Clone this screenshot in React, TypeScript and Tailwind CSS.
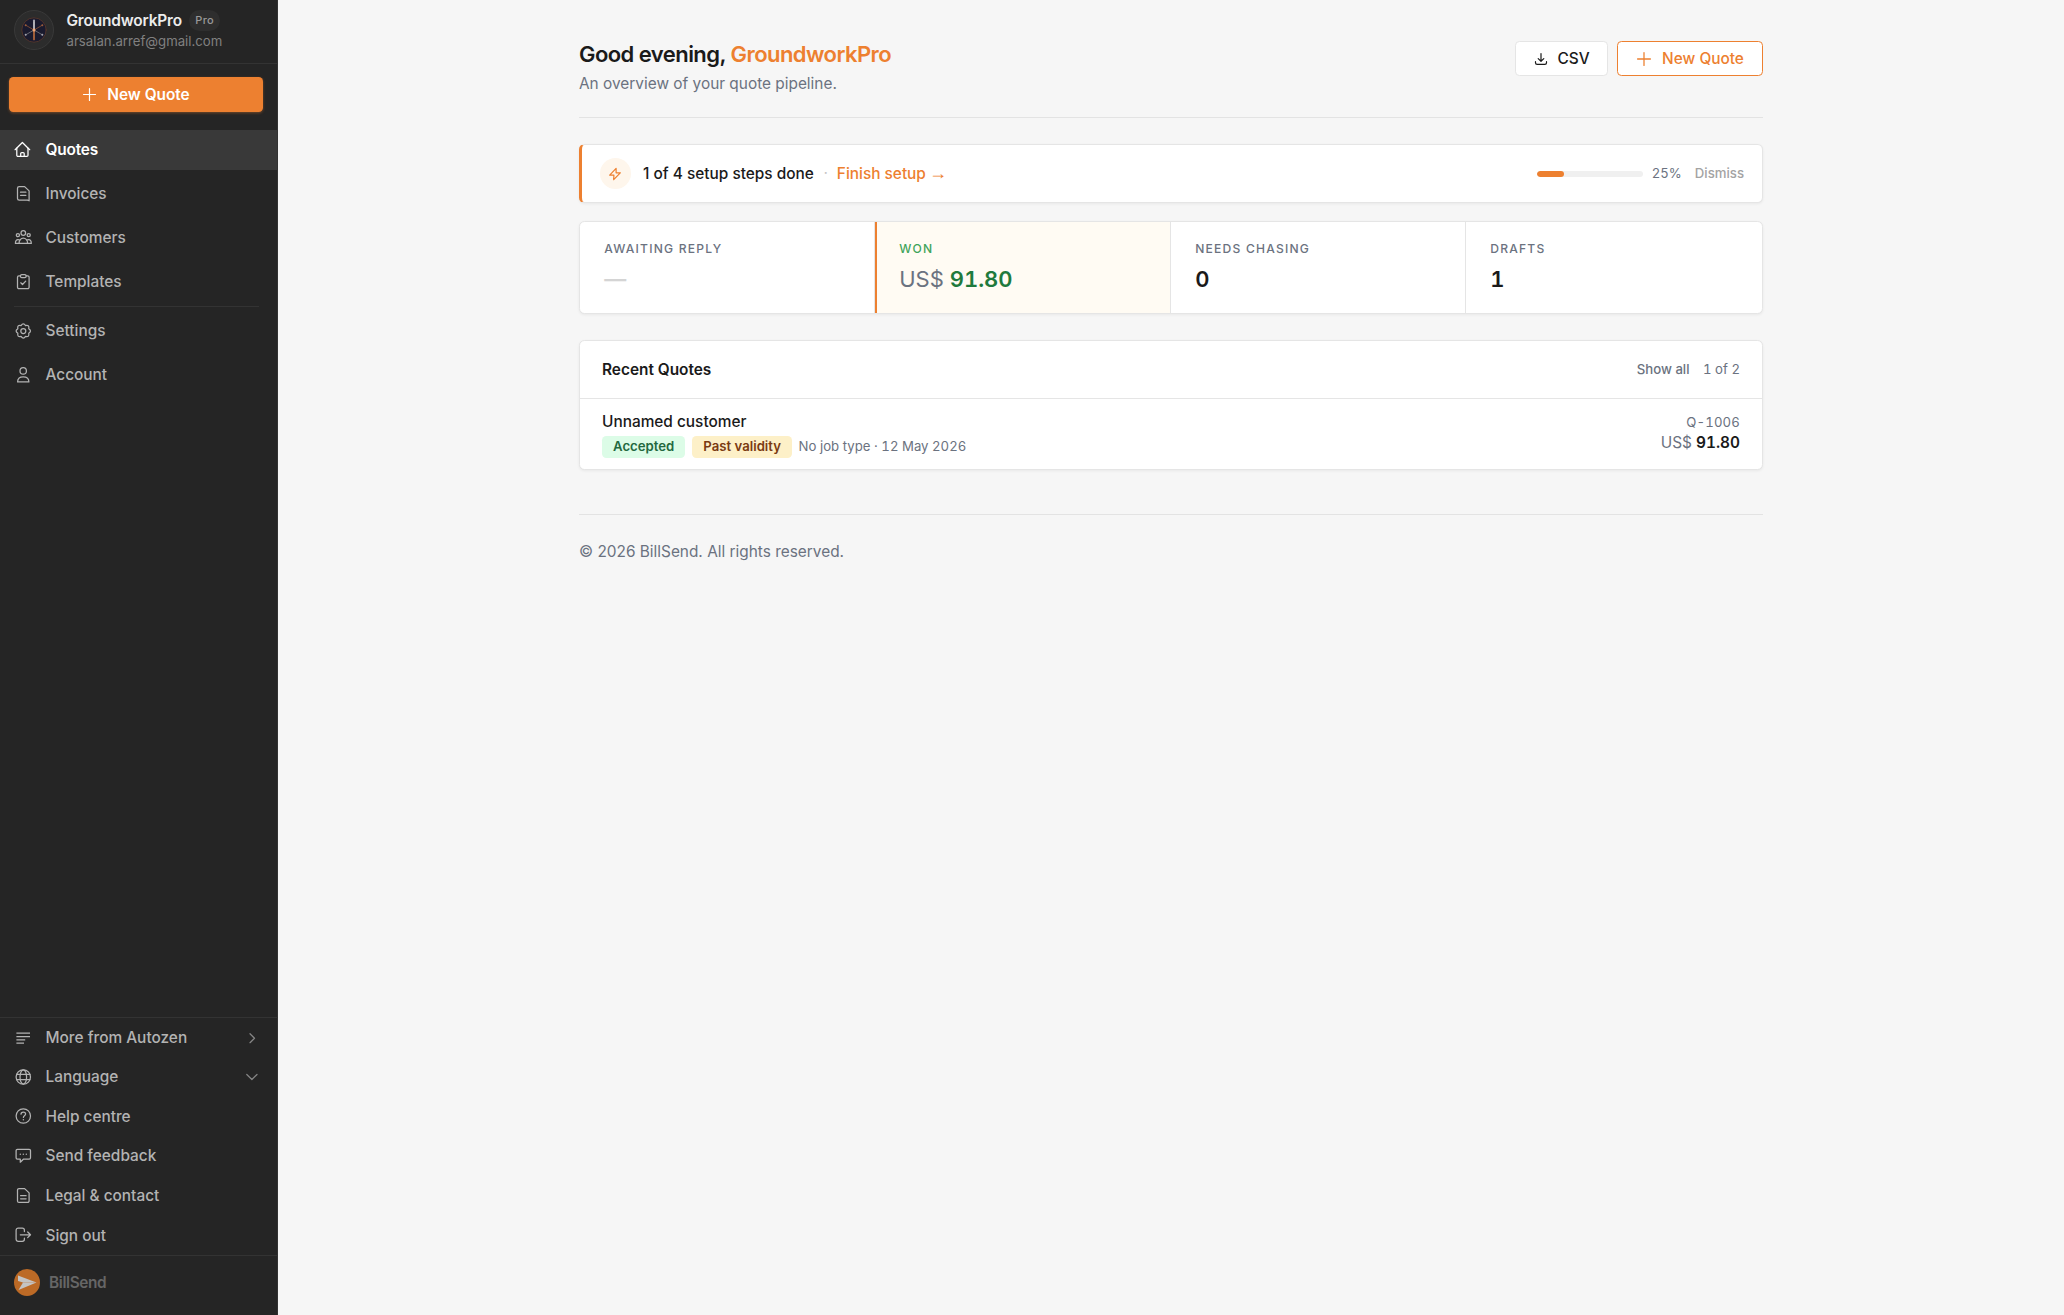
import type { ReactNode } from 'react';

function Icon({ children, className = 'size-[18px]' }: { children: ReactNode; className?: string }) {
  return (
    <svg
      viewBox="0 0 18 18"
      fill="none"
      stroke="currentColor"
      strokeWidth="1.25"
      strokeLinecap="round"
      strokeLinejoin="round"
      className={`${className} shrink-0`}
    >
      {children}
    </svg>
  );
}

const icons = {
  home: (
    <>
      <path d="M1.1 8.7 8.4 1.5l7.3 7.2" />
      <path d="M2.8 7.2v7a1.2 1.2 0 0 0 1.2 1.2h8.8a1.2 1.2 0 0 0 1.2-1.2v-7" />
      <path d="M6.7 15.2v-2.6a1.1 1.1 0 0 1 1.1-1.1h1.3a1.1 1.1 0 0 1 1.1 1.1v2.6" />
    </>
  ),
  invoice: (
    <>
      <path d="M5.2 1.6h5.4l4.5 4.3v9.9l-1.6-.7H5.2a1.7 1.7 0 0 1-1.7-1.7V3.3a1.7 1.7 0 0 1 1.7-1.7Z" />
      <path d="M6.5 7.2h5.4M6.5 10.3h5.4" />
    </>
  ),
  customers: (
    <>
      <circle cx="9.3" cy="4" r="2.3" />
      <circle cx="3.9" cy="6.1" r="1.6" />
      <circle cx="14.7" cy="6.1" r="1.6" />
      <path d="M5 14.4c0-3.1 1.9-5.2 4.3-5.2s4.3 2.1 4.3 5.2Z" />
      <path d="M5 14.4H1.4c0-2.3.9-3.9 2.6-3.9.7 0 1.3.2 1.7.6M13.6 14.4h3.7c0-2.3-.9-3.9-2.7-3.9-.7 0-1.3.2-1.7.6" />
    </>
  ),
  templates: (
    <>
      <path d="M6.4 2.9H4.9a1.4 1.4 0 0 0-1.4 1.4v10a1.4 1.4 0 0 0 1.4 1.4h8.8a1.4 1.4 0 0 0 1.4-1.4v-10a1.4 1.4 0 0 0-1.4-1.4h-1.5" />
      <rect x="6.5" y="1.5" width="5.6" height="3.2" rx="1.2" />
      <path d="m6.8 9.8 1.7 1.7 3.2-3.4" />
    </>
  ),
  settings: (
    <>
      <circle cx="9.3" cy="9" r="2.5" />
      <path d="M7.04 3.55Q9.3.1 11.56 3.55 15.6 2.7 14.75 6.74 18.2 9 14.75 11.26 15.6 15.3 11.56 14.45 9.3 17.9 7.04 14.45 3 15.3 3.85 11.26.4 9 3.85 6.74 3 2.7 7.04 3.55Z" />
    </>
  ),
  account: (
    <>
      <circle cx="9.2" cy="4.9" r="3.2" />
      <path d="M3.6 15.9c0-3 2-5 5.6-5s5.7 2 5.7 5Z" />
    </>
  ),
  more: <path d="M2.4 4.2H16M2.4 7.5H16M2.4 10.9h8.8M2.4 14.2h7.6" strokeLinecap="butt" />,
  globe: (
    <>
      <circle cx="9.3" cy="9" r="7.2" />
      <ellipse cx="9.3" cy="9" rx="3.3" ry="7.2" />
      <path d="M2.7 6.4h13.2M2.7 11.6h13.2" />
    </>
  ),
  help: (
    <>
      <circle cx="9.3" cy="9" r="7.2" />
      <path d="M7 7.2c0-1.3 1-2.2 2.300-2.200s2.300.9 2.300 2.100c0 1.600-2.200 1.700-2.200 3.300" />
      <path d="M9.4 12.7v.1" strokeWidth="1.5" />
    </>
  ),
  feedback: (
    <>
      <path d="M3.4 2.3h11.8a1.3 1.3 0 0 1 1.3 1.3v7.1a1.3 1.3 0 0 1-1.3 1.3H9.6l-3.3 3.2V12H3.4a1.3 1.3 0 0 1-1.3-1.3V3.6a1.3 1.3 0 0 1 1.3-1.3Z" />
      <path d="M6.3 7.2v.1M9.3 7.2v.1M12.3 7.2v.1" strokeWidth="1.4" />
    </>
  ),
  page: (
    <>
      <path d="M5 1.6h5.6l4.5 4.3v8a1.5 1.5 0 0 1-1.5 1.500H5a1.500 1.500 0 0 1-1.500-1.500V3.100A1.500 1.500 0 0 1 5 1.600Z" />
      <path d="M6.600 8.700h5.500M6.600 11.800h5.500" />
    </>
  ),
  signOut: (
    <>
      <path d="M10.4 5.5V4.300a2.100 2.100 0 0 0-2.100-2.100H4.200a2.100 2.100 0 0 0-2.100 2.100v9a2.100 2.100 0 0 0 2.100 2.100h4.100a2.100 2.100 0 0 0 2.100-2.100v-1.200" />
      <path d="M6.3 8.800h10M13.700 6l2.800 2.800-2.800 2.800" />
    </>
  ),
};

type IconName = keyof typeof icons;

const MAIN_NAV: { label: string; icon: IconName; active?: boolean }[] = [
  { label: 'Quotes', icon: 'home', active: true },
  { label: 'Invoices', icon: 'invoice' },
  { label: 'Customers', icon: 'customers' },
  { label: 'Templates', icon: 'templates' },
];

const ACCOUNT_NAV: { label: string; icon: IconName }[] = [
  { label: 'Settings', icon: 'settings' },
  { label: 'Account', icon: 'account' },
];

const FOOTER_NAV: { label: string; icon: IconName; arrow?: 'right' | 'down' }[] = [
  { label: 'More from Autozen', icon: 'more', arrow: 'right' },
  { label: 'Language', icon: 'globe', arrow: 'down' },
  { label: 'Help centre', icon: 'help' },
  { label: 'Send feedback', icon: 'feedback' },
  { label: 'Legal & contact', icon: 'page' },
  { label: 'Sign out', icon: 'signOut' },
];

export default function App() {
  return (
    <div className="flex h-screen bg-[#f6f6f6] font-['Inter',sans-serif] text-[15.4px] text-[#1a1a1a]">
      <Sidebar />
      <main className="flex-1">
        <div className="mx-auto w-[1184px] pt-[41px]">
          <Header />
          <SetupCard />
          <Stats />
          <RecentQuotes />
          <footer className="mt-11 border-t border-[#e3e3e3] pt-[26px] leading-[22px] text-[#6b7280]">
            © 2026 BillSend. All rights reserved.
          </footer>
        </div>
      </main>
    </div>
  );
}

function Sidebar() {
  return (
    <aside className="flex w-[278px] shrink-0 flex-col border-r border-[#333] bg-[#252525] font-medium text-[#b3b3b3]">
      <div className="flex h-16 items-start border-b border-[#333] pl-3.5 pt-2.5">
        <Avatar />
        <div className="ml-[12.5px]">
          <div className="flex h-[21px] items-center">
            <span className="font-semibold tracking-[-0.01em] text-[#ececec]">GroundworkPro</span>
            <span className="ml-[7px] flex h-[21px] items-center rounded-full bg-[#2e2e2e] px-[6.5px] text-[11px] tracking-[0.02em] text-[#999]">Pro</span>
          </div>
          <div className="text-[13.2px] font-normal leading-5 text-[#808080]">arsalan.arref@gmail.com</div>
        </div>
      </div>

      <button className="ml-[9px] mt-[13px] flex h-[35px] w-[254px] items-center justify-center gap-2.5 rounded-[4.4px] bg-[#ed8030] font-semibold text-white shadow-[0_1px_3px_rgba(237,128,48,0.4)]">
        <Plus />
        New Quote
      </button>

      <nav className="mt-[18px] flex flex-col gap-1">
        {MAIN_NAV.map((item) => (
          <a
            key={item.label}
            className={`flex h-10 items-center pl-3.5 ${item.active ? 'bg-[#393939] font-semibold tracking-[-0.01em] text-white' : ''}`}
          >
            <Icon>{icons[item.icon]}</Icon>
            <span className="ml-[13.5px]">{item.label}</span>
          </a>
        ))}
      </nav>
      <div className="mb-1 ml-3.5 mr-[18px] mt-1 h-px bg-[#333]" />
      <nav className="flex flex-col gap-1">
        {ACCOUNT_NAV.map((item) => (
          <a key={item.label} className="flex h-10 items-center pl-3.5">
            <Icon>{icons[item.icon]}</Icon>
            <span className="ml-[13.5px]">{item.label}</span>
          </a>
        ))}
      </nav>

      <div className="mt-auto border-t border-[#333]">
        {FOOTER_NAV.map((item) => (
          <a key={item.label} className="flex h-[39.6px] items-center pl-3.5 pr-4 first:h-[38.8px]">
            <Icon>{icons[item.icon]}</Icon>
            <span className="ml-[13.5px] flex-1">{item.label}</span>
            {item.arrow && (
              <Icon className="size-[18px] text-[#858585]">
                {item.arrow === 'right' ? <path d="m7 4.7 4.5 4.5L7 13.7" /> : <path d="m3.8 6.5 5.1 5 5.1-5" />}
              </Icon>
            )}
          </a>
        ))}
      </div>
      <div className="flex h-[60px] items-start border-t border-[#333] pl-3.5 pt-[13px]">
        <svg viewBox="0 0 26 27" className="h-[27px] w-[26px]">
          <ellipse cx="13" cy="13.5" rx="13" ry="13.5" fill="#bc6a26" />
          <path d="M4 6.5 22.500 13.500 9 13.500 4 12Z" fill="#c4c4c4" />
          <path d="M9 13.500h13.500L4.500 21Z" fill="#c4c4c4" />
        </svg>
        <span className="ml-[9px] font-semibold leading-[27px] tracking-[-0.025em] text-[#666]">BillSend</span>
      </div>
    </aside>
  );
}

function Avatar() {
  return (
    <div className="flex size-10 shrink-0 items-center justify-center rounded-full border border-[#393939] bg-[#2c2c2c]">
      <svg viewBox="0 0 26 26" className="size-[26px]" strokeLinecap="round">
        <circle cx="13" cy="13" r="12.2" fill="#1a1a2e" stroke="#5d3a2b" strokeWidth="0.8" />
        <path d="M4.7 8.2 13 13l8.300-4.800" stroke="#8a5236" fill="none" strokeWidth="0.8" />
        <path d="M4.7 17.8 13 13l8.300 4.800" stroke="#77777f" fill="none" strokeWidth="0.8" />
        <path d="M13 4v9" stroke="#f0f0f0" strokeWidth="1.4" />
        <path d="M13 13v9" stroke="#d97d40" strokeWidth="1.4" />
        <g fill="#9a5b3a">
          <circle cx="4.7" cy="8.2" r="1" />
          <circle cx="21.3" cy="8.2" r="1" />
          <circle cx="13" cy="22.3" r="1.1" />
        </g>
        <g fill="#a3a3ad">
          <circle cx="4.7" cy="17.8" r="1" />
          <circle cx="21.3" cy="17.8" r="1" />
          <circle cx="13" cy="3.7" r="1.1" />
        </g>
        <circle cx="13" cy="13" r="1.5" fill="#f0a878" />
      </svg>
    </div>
  );
}

function Plus({ className = 'size-[15px]' }: { className?: string }) {
  return (
    <svg viewBox="0 0 15 15" fill="none" stroke="currentColor" strokeWidth="1.2" strokeLinecap="round" className={className}>
      <path d="M7.5 1.5v12M1.5 7.5h12" />
    </svg>
  );
}

function Header() {
  return (
    <header className="flex h-[77px] items-start justify-between border-b border-[#e3e3e3]">
      <div>
        <h1 className="text-[22px] font-semibold leading-[27px] tracking-[-0.025em]">
          Good evening, <span className="text-[#ed8030]">GroundworkPro</span>
        </h1>
        <p className="mt-1 leading-[23px] text-[#6b7280]">An overview of your quote pipeline.</p>
      </div>
      <div className="flex gap-[9px] font-medium">
        <button className="flex h-[35px] w-[93px] items-center justify-center gap-2 rounded-[4.4px] border border-[#e5e5e5] bg-white">
          <svg viewBox="0 0 16 16" fill="none" stroke="currentColor" strokeWidth="1.2" strokeLinecap="round" strokeLinejoin="round" className="size-4">
            <path d="M8 2.5v7.600M5.200 7.600 8 10.300l2.800-2.700M2.500 10.700v1a1.700 1.700 0 0 0 1.700 1.700h7.600a1.700 1.700 0 0 0 1.700-1.700v-1" />
          </svg>
          CSV
        </button>
        <button className="flex h-[35px] w-[146px] items-center justify-center gap-2.5 rounded-[4.4px] border border-[#ed8030] bg-white text-[#ed8030]">
          <Plus className="size-4" />
          New Quote
        </button>
      </div>
    </header>
  );
}

function SetupCard() {
  return (
    <section className="mt-[26px] flex h-[59px] items-center rounded-[5.5px] border border-l-[3px] border-[#e5e5e5] border-l-[#ed8030] bg-white pl-[17.5px] pr-[18px] font-medium shadow-[0_1px_3px_rgba(0,0,0,0.06)]">
      <span className="flex size-[31px] items-center justify-center rounded-full bg-[#fef6ec] text-[#ed8030]">
        <svg viewBox="0 0 14 14" fill="none" stroke="currentColor" strokeWidth="1.2" strokeLinejoin="round" className="size-3.5">
          <path d="M8.1 1.3 1.7 8.200h4.200l-.2 4.500 6.600-6.900H8.100Z" />
        </svg>
      </span>
      <span className="ml-[12.5px]">1 of 4 setup steps done</span>
      <span className="ml-2.5 text-[13.2px] text-[#c4c4c4]">·</span>
      <a className="ml-[9px] flex items-center text-[#ed8030]">
        Finish setup
        <span className="ml-[3px] font-['Liberation_Sans',sans-serif] text-[18px] font-normal leading-4">→</span>
      </a>
      <div className="ml-auto h-1.5 w-[106px] overflow-hidden rounded-full bg-[#f0f0f0]">
        <div className="h-full w-[27px] rounded-full bg-[#ed8030]" />
      </div>
      <span className="ml-[9px] text-[13.2px] font-normal tabular-nums text-[#6b7280]">25%</span>
      <span className="ml-[13px] text-[13.2px] text-[#a3a3a3]">Dismiss</span>
    </section>
  );
}

function Stats() {
  return (
    <section className="mt-[18px] grid h-[93px] grid-cols-[295px_296px_295px_1fr] overflow-hidden rounded-[5.5px] border border-[#e5e5e5] bg-white text-[22px] font-semibold tabular-nums shadow-[0_1px_3px_rgba(0,0,0,0.06)]">
      <Stat label="Awaiting reply" className="border-r border-[#e5e5e5] text-[#6b7280]">
        <span className="text-[#d4d4d4]">—</span>
      </Stat>
      <Stat label="Won" className="border-r border-[#e5e5e5] bg-[#fffbf3] text-[#3fa45b] shadow-[inset_2px_0_0_#ed8030]">
        <span className="font-normal text-[#6b7280]">US$</span> <span className="text-[#1f7a3d]">91.80</span>
      </Stat>
      <Stat label="Needs chasing" className="border-r border-[#e5e5e5] text-[#6b7280]">
        <span className="text-[#1a1a1a]">0</span>
      </Stat>
      <Stat label="Drafts" className="text-[#6b7280]">
        <span className="text-[#1a1a1a]">1</span>
      </Stat>
    </section>
  );
}

function Stat({ label, className, children }: { label: string; className: string; children: ReactNode }) {
  return (
    <div className={`pl-[24.2px] pt-[18px] ${className}`}>
      <div className="text-[12.1px] font-medium uppercase leading-[18px] tracking-[0.1em]">{label}</div>
      <div className="mt-2 leading-[27px]">{children}</div>
    </div>
  );
}

function RecentQuotes() {
  return (
    <section className="mt-[26px] h-[130px] rounded-[5.5px] border border-[#e5e5e5] bg-white shadow-[0_1px_3px_rgba(0,0,0,0.06)]">
      <div className="flex h-[58px] items-center border-b border-[#e5e5e5] px-[22px]">
        <h2 className="font-semibold">Recent Quotes</h2>
        <div className="ml-auto flex gap-[13.5px] text-[13.2px] tabular-nums text-[#6b7280]">
          <span className="font-medium">Show all</span>
          <span>1 of 2</span>
        </div>
      </div>
      <div className="flex justify-between px-[22px] pt-3">
        <div>
          <div className="font-medium leading-[22px]">Unnamed customer</div>
          <div className="mt-[3px] flex items-center text-[13.2px] leading-[20px]">
            <span className="rounded-[4.4px] bg-[#dcfce7] px-[11px] pb-0.5 font-semibold text-[#23693f]">Accepted</span>
            <span className="ml-[7px] rounded-[4.4px] bg-[#fdf0c8] px-[11px] pb-0.5 font-semibold text-[#7a3a12]">Past validity</span>
            <span className="ml-[6.6px] pb-0.5 tabular-nums text-[#6b7280]">No job type · 12 May 2026</span>
          </div>
        </div>
        <div className="text-right tabular-nums">
          <div className="text-[13.2px] leading-[22px] tracking-[0.01em] text-[#6b7280]">Q-1006</div>
          <div className="leading-[20px]">
            <span className="text-[#6b7280]">US$</span> <span className="font-semibold">91.80</span>
          </div>
        </div>
      </div>
    </section>
  );
}
